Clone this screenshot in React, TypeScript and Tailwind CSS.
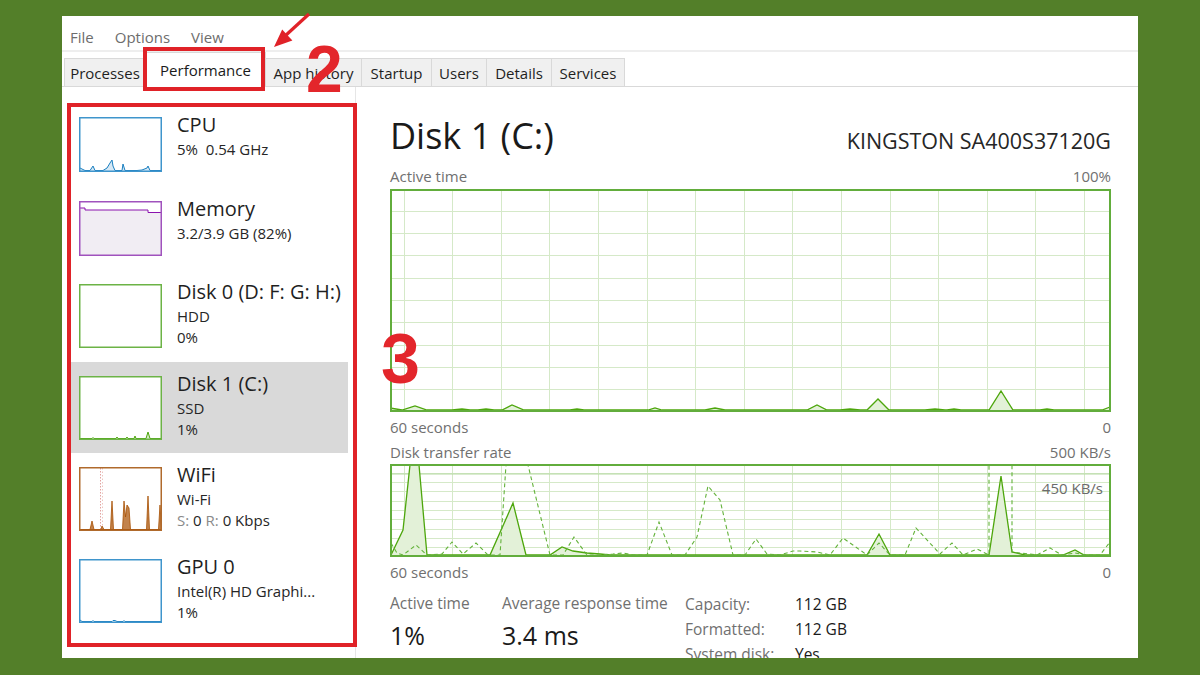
import React from 'react';

const vx = Array.from({ length: 15 }, (_, k) => 14 + k * 48.6);

function Thumb({ kind, h }: { kind: string; h: number }) {
  const w = 83;
  const b = h - 1.5;
  let border = '#3f95cc';
  let content: React.ReactNode = null;
  if (kind === 'cpu') {
    border = '#3f95cc';
    const pts = `1,51 6,${b} 11,${b} 14,49 16,${b} 24,${b} 28,51 31,46 33,43 34,49 36,${b} 43,${b} 44,47 46,${b} 58,${b} 63,53 68,51 69,49 71,${b} 82,${b}`;
    content = (
      <>
        <polygon points={`${pts} 82,${h} 1,${h}`} fill="#d6e8f5" />
        <polyline points={pts} fill="none" stroke="#1a7fc0" strokeWidth="1" />
      </>
    );
  } else if (kind === 'mem') {
    border = '#a052bd';
    content = (
      <>
        <path d={`M1,7 H6 V9 H69 V11.5 H82 V${h} H1 Z`} fill="#f1edf3" />
        <polyline points="1,7 6,7 6,9 69,9 69,11.5 82,11.5" fill="none" stroke="#8b12ae" strokeWidth="1" />
      </>
    );
  } else if (kind === 'disk0') {
    border = '#6cb346';
  } else if (kind === 'disk1') {
    border = '#6cb346';
    const pts = `1,${b} 13,${b} 14,61.5 15,${b} 37,${b} 38,61 39,${b} 47,${b} 48,61 49,${b} 55,${b} 56,60 57,${b} 67,${b} 69,56 71,${b} 82,${b}`;
    content = (
      <>
        <polygon points={`${pts} 82,${h} 1,${h}`} fill="#d8ecc9" />
        <polyline points={pts} fill="none" stroke="#4da60c" strokeWidth="1" />
      </>
    );
  } else if (kind === 'wifi') {
    border = '#b06a2c';
    const peaks = [
      `11,${b} 13,54 15,${b}`,
      `22,${b} 23,59 25,${b}`,
      `31.5,${b} 33,34 34.5,${b}`,
      `43.5,${b} 45,34 46.5,50 48,38 50,41 51.5,${b}`,
      `67.5,${b} 69,29 70.5,${b}`,
      `79.5,${b} 81,38 82.5,${b}`,
    ];
    content = (
      <>
        <line x1="21.5" y1="1" x2="21.5" y2={b} stroke="#e2a3a0" strokeWidth="1" strokeDasharray="1.5 1.5" />
        <line x1="23.5" y1="1" x2="23.5" y2={b} stroke="#ecc4bf" strokeWidth="1" strokeDasharray="1.5 2" />
        {peaks.map((p, i) => (
          <polygon key={i} points={p} fill="#c2834c" stroke="#a74f01" strokeWidth="0.8" />
        ))}
        <line x1="1" y1={b} x2="82" y2={b} stroke="#a74f01" strokeWidth="1" />
      </>
    );
  } else if (kind === 'gpu') {
    border = '#3f95cc';
    const pts = `1,61 3,${b} 13,${b} 14,61.5 15,${b} 33,${b} 34,61.5 36,61.5 38,${b} 44,${b} 45,61.5 46,${b} 82,${b}`;
    content = <polyline points={pts} fill="none" stroke="#1a7fc0" strokeWidth="1" />;
  }
  return (
    <svg width={w} height={h} viewBox={`0 0 ${w} ${h}`} className="shrink-0 bg-white">
      {content}
      <rect x="0.75" y="0.75" width={w - 1.5} height={h - 1.5} fill="none" stroke={border} strokeWidth="1.5" />
    </svg>
  );
}

function SideItem({
  kind,
  thumbH,
  rowClass,
  title,
  lines,
}: {
  kind: string;
  thumbH: number;
  rowClass: string;
  title: string;
  lines: React.ReactNode[];
}) {
  return (
    <div className={`flex pl-[9px] pt-[14px] shrink-0 ${rowClass}`}>
      <Thumb kind={kind} h={thumbH} />
      <div className="ml-[15px] mt-[-4px] flex flex-col">
        <div className="text-[20px] leading-[24px] text-[#1f1f1f] whitespace-nowrap">{title}</div>
        <div className="mt-[2px] flex flex-col">
          {lines.map((l, i) => (
            <div key={i} className="text-[15px] leading-[21px] text-[#262626] whitespace-nowrap">
              {l}
            </div>
          ))}
        </div>
      </div>
    </div>
  );
}

function Grid({ h, rows }: { h: number; rows: number }) {
  const hy = Array.from({ length: rows - 1 }, (_, k) => ((k + 1) * h) / rows);
  return (
    <g stroke="#d5e9c8" strokeWidth="1" shapeRendering="crispEdges">
      {vx.map((x, i) => (
        <line key={`v${i}`} x1={x} y1="0" x2={x} y2={h} />
      ))}
      {hy.map((y, i) => (
        <line key={`h${i}`} x1="0" y1={y} x2="721" y2={y} />
      ))}
    </g>
  );
}

const chart1 = [
  [0, 219], [12, 221], [25, 217], [37, 221], [62, 221], [72, 220], [80, 221], [88, 221], [96, 220], [104, 221],
  [112, 221], [122, 216], [134, 221], [180, 221], [187, 220], [194, 221], [258, 221], [265, 219], [272, 221],
  [315, 221], [325, 219], [335, 221], [417, 221], [427, 216], [437, 221], [450, 221], [460, 220], [470, 221],
  [477, 221], [488, 210], [499, 221], [535, 221], [545, 220], [555, 221], [557, 221], [564, 220], [571, 221],
  [599, 221], [611, 202], [623, 221], [650, 221], [657, 220], [664, 221], [712, 221], [720, 218],
];

const solid2 = [
  [1, 91], [13, 66], [20, 1], [29, 1], [37, 91], [100, 91], [123, 39], [136, 91], [160, 91], [172, 83], [183, 87],
  [197, 89], [210, 90], [220, 91], [477, 91], [489, 70], [500, 91], [599, 91], [611, 12], [622, 88], [635, 91],
  [673, 91], [685, 86], [694, 91], [720, 91],
];

const dashed2 = [
  [1, 79], [7, 89], [13, 91], [26, 81], [37, 91], [52, 90], [62, 78], [73, 90], [86, 79], [98, 91], [110, 91],
  [116, 1], [138, 1], [160, 91], [173, 91], [184, 73], [197, 91], [210, 91], [223, 90], [233, 89], [243, 91],
  [257, 91], [269, 58], [282, 91], [295, 91], [307, 73], [318, 22], [330, 36], [343, 91], [355, 91], [366, 75],
  [377, 90], [390, 91], [403, 87], [410, 87], [427, 88], [440, 91], [453, 74], [477, 91], [489, 79], [500, 91],
  [515, 91], [526, 64], [550, 90], [562, 79], [573, 91], [587, 85], [599, 91], [599, 1], [622, 1], [622, 88],
  [647, 91], [660, 84], [672, 91], [685, 89], [697, 91], [710, 91], [720, 78],
];

const toPts = (a: number[][]) => a.map((p) => p.join(',')).join(' ');

function ActiveChart() {
  const h = 223;
  const pts = toPts(chart1);
  return (
    <svg width="721" height={h} viewBox={`0 0 721 ${h}`} className="block shrink-0">
      <rect x="0" y="0" width="721" height={h} fill="#ffffff" />
      <Grid h={h} rows={10} />
      <polygon points={`${pts} 720,222 0,222`} fill="#e3f1d8" />
      <polyline points={pts} fill="none" stroke="#4da60c" strokeWidth="1.3" />
      <rect x="1" y="1" width="719" height={h - 2} fill="none" stroke="#62ad3c" strokeWidth="2" />
    </svg>
  );
}

function TransferChart() {
  const h = 93;
  const s = toPts(solid2);
  const d = toPts(dashed2);
  return (
    <div className="relative">
      <svg width="721" height={h} viewBox={`0 0 721 ${h}`} className="block shrink-0">
        <rect x="0" y="0" width="721" height={h} fill="#ffffff" />
        <Grid h={h} rows={10} />
        <line x1="0" y1="10" x2="721" y2="10" stroke="#b6d9a2" strokeWidth="1.2" />
        <polygon points={`${s} 720,92 1,92`} fill="#e3f1d8" />
        <polyline points={s} fill="none" stroke="#4da60c" strokeWidth="1.3" />
        <polyline points={d} fill="none" stroke="#63b23a" strokeWidth="1.1" strokeDasharray="4 3" />
        <rect x="1" y="1" width="719" height={h - 2} fill="none" stroke="#62ad3c" strokeWidth="2" />
      </svg>
      <div className="absolute right-[8px] top-[14px] text-[15px] leading-[20px] text-[#6b6b6b]">450 KB/s</div>
    </div>
  );
}

const tabs: { label: string; w: string; sel?: boolean }[] = [
  { label: 'Processes', w: 'w-[82px] border-l' },
  { label: 'Performance', w: 'w-[120px]', sel: true },
  { label: 'App history', w: 'w-[96px]' },
  { label: 'Startup', w: 'w-[70px]' },
  { label: 'Users', w: 'w-[55px]' },
  { label: 'Details', w: 'w-[65px]' },
  { label: 'Services', w: 'w-[73px]' },
];

export default function App() {
  return (
    <div className="relative w-[1200px] h-[675px] bg-[#537f29] pt-[16px] pl-[62px] pr-[62px] pb-[17px] font-['Open_Sans',sans-serif] overflow-hidden">
      <div className="w-full h-full bg-white flex flex-col overflow-hidden">
        {/* Menu bar */}
        <div className="h-[34px] shrink-0 flex gap-[21px] pl-[8px] pt-[11px] text-[15px] leading-[20px] text-[#6d6d6d]">
          <span>File</span>
          <span>Options</span>
          <span>View</span>
        </div>
        <div className="h-[2px] shrink-0 bg-[#eeeeee]" />
        {/* Tabs */}
        <div className="h-[35px] shrink-0 flex items-end pl-[2px] border-b border-[#d9d9d9]">
          {tabs.map((t) =>
            t.sel ? (
              <div
                key={t.label}
                className={`${t.w} h-[35px] mb-[-1px] bg-white border-t border-r border-[#d9d9d9] flex items-center justify-center text-[15px] leading-[20px] text-[#1a1a1a] whitespace-nowrap`}
              >
                {t.label}
              </div>
            ) : (
              <div
                key={t.label}
                className={`${t.w} h-[28px] bg-[#f0f0f0] border-t border-r border-[#d9d9d9] flex items-center justify-center text-[15px] leading-[20px] text-[#1f1f1f] whitespace-nowrap`}
              >
                {t.label}
              </div>
            )
          )}
        </div>
        {/* Body */}
        <div className="flex-1 min-h-0 flex overflow-hidden">
          {/* Sidebar */}
          <div className="w-[294px] shrink-0 border-r border-[#e6e6e6] pt-[16px] pl-[8px] pr-[7px] flex flex-col">
            <SideItem kind="cpu" thumbH={55} rowClass="h-[84px]" title="CPU" lines={[<span key="a">5%&nbsp;&nbsp;0.54 GHz</span>]} />
            <SideItem kind="mem" thumbH={55} rowClass="h-[83px]" title="Memory" lines={['3.2/3.9 GB (82%)']} />
            <SideItem kind="disk0" thumbH={64} rowClass="h-[92px]" title="Disk 0 (D: F: G: H:)" lines={['HDD', '0%']} />
            <SideItem kind="disk1" thumbH={64} rowClass="h-[91px] bg-[#d9d9d9]" title="Disk 1 (C:)" lines={['SSD', '1%']} />
            <SideItem
              kind="wifi"
              thumbH={64}
              rowClass="h-[92px]"
              title="WiFi"
              lines={[
                'Wi-Fi',
                <span key="s">
                  <span className="text-[#8a8a8a]">S:</span> 0 <span className="text-[#8a8a8a]">R:</span> 0 Kbps
                </span>,
              ]}
            />
            <SideItem kind="gpu" thumbH={64} rowClass="h-[92px]" title="GPU 0" lines={['Intel(R) HD Graphi...', '1%']} />
          </div>
          {/* Main */}
          <div className="flex-1 min-w-0 pl-[34px] pr-[27px] pt-[27px] flex flex-col">
            <div className="h-[44px] shrink-0 flex justify-between items-baseline">
              <span className="text-[36px] leading-[44px] text-[#1a1a1a]">Disk 1 (C:)</span>
              <span className="text-[21.5px] leading-[28px] text-[#262626]">KINGSTON SA400S37120G</span>
            </div>
            <div className="mt-[8px] h-[20px] shrink-0 flex justify-between text-[15px] leading-[20px] text-[#707070]">
              <span>Active time</span>
              <span>100%</span>
            </div>
            <div className="mt-[3px] shrink-0">
              <ActiveChart />
            </div>
            <div className="mt-[5px] h-[20px] shrink-0 flex justify-between text-[15px] leading-[20px] text-[#707070]">
              <span>60 seconds</span>
              <span>0</span>
            </div>
            <div className="mt-[5px] h-[20px] shrink-0 flex justify-between text-[15px] leading-[20px] text-[#707070]">
              <span>Disk transfer rate</span>
              <span>500 KB/s</span>
            </div>
            <div className="mt-[2px] shrink-0">
              <TransferChart />
            </div>
            <div className="mt-[5px] h-[20px] shrink-0 flex justify-between text-[15px] leading-[20px] text-[#707070]">
              <span>60 seconds</span>
              <span>0</span>
            </div>
            <div className="mt-[10px] shrink-0 flex">
              <div className="w-[112px] shrink-0 flex flex-col">
                <span className="mt-[1px] text-[15.5px] leading-[20px] text-[#707070]">Active time</span>
                <span className="mt-[7px] text-[25px] leading-[30px] text-[#1a1a1a]">1%</span>
              </div>
              <div className="w-[183px] shrink-0 flex flex-col">
                <span className="mt-[1px] text-[15.5px] leading-[20px] text-[#707070] whitespace-nowrap">Average response time</span>
                <span className="mt-[7px] text-[25px] leading-[30px] text-[#1a1a1a]">3.4 ms</span>
              </div>
              <div className="grid grid-cols-[110px_auto] text-[15.5px] leading-[25px]">
                <span className="text-[#707070]">Capacity:</span>
                <span className="text-[#1a1a1a]">112 GB</span>
                <span className="text-[#707070]">Formatted:</span>
                <span className="text-[#1a1a1a]">112 GB</span>
                <span className="text-[#707070]">System disk:</span>
                <span className="text-[#1a1a1a]">Yes</span>
              </div>
            </div>
          </div>
        </div>
      </div>

      {/* Annotations */}
      <div className="absolute left-[143px] top-[47px] w-[122px] h-[44px] border-4 border-[#e02228] pointer-events-none" />
      <div className="absolute left-[67px] top-[103px] w-[290px] h-[544px] border-4 border-[#e02228] pointer-events-none" />
      <svg className="absolute left-0 top-0 pointer-events-none" width="1200" height="675" viewBox="0 0 1200 675">
        <line x1="309" y1="14" x2="285" y2="36" stroke="#e02228" strokeWidth="3.2" />
        <polygon points="274,47 292.4,40.4 282.2,29.4" fill="#e02228" />
      </svg>
      <div className="absolute left-[306px] top-[36px] text-[66px] leading-[66px] font-bold text-[#e3262b] font-['Liberation_Sans',Arial,sans-serif]">
        2
      </div>
      <div className="absolute left-[381px] top-[324px] text-[70px] leading-[70px] font-bold text-[#e3262b] font-['Liberation_Sans',Arial,sans-serif]">
        3
      </div>
    </div>
  );
}
